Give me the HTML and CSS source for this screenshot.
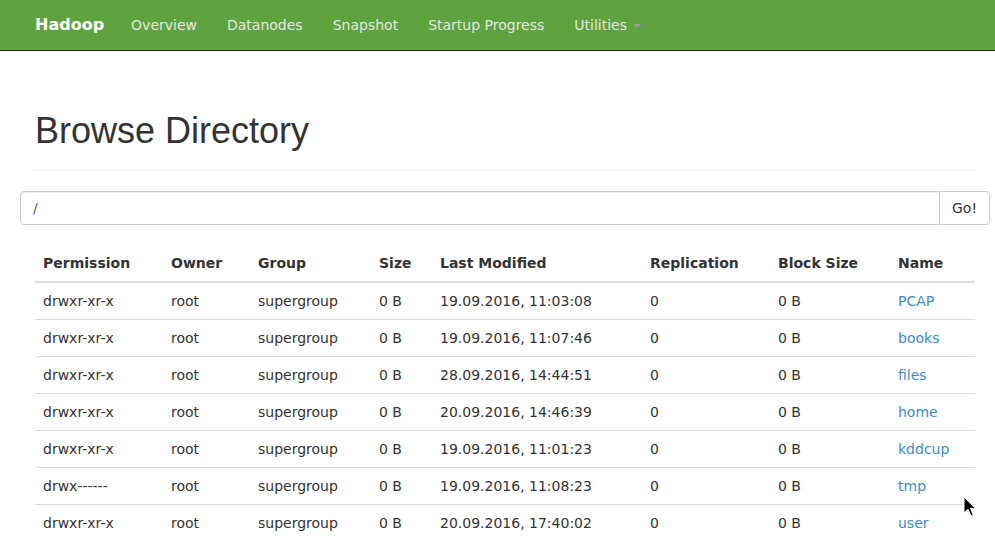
FILE: index.html
```html
<!DOCTYPE html>
<html>
<head>
<meta charset="utf-8">
<title>Browsing HDFS</title>
<link rel="stylesheet" href="styles.css">
</head>
<body>
<header class="navbar">
  <div class="nav-inner">
    <a class="brand" href="#">Hadoop</a>
    <ul class="nav-links">
      <li><a href="#">Overview</a></li>
      <li><a href="#">Datanodes</a></li>
      <li><a href="#">Snapshot</a></li>
      <li><a href="#">Startup Progress</a></li>
      <li><a href="#">Utilities <span class="caret"></span></a></li>
    </ul>
  </div>
</header>
<main class="container">
  <div class="page-header">
    <h1>Browse Directory</h1>
  </div>
  <div class="input-group">
    <input class="path-input" type="text" value="/">
    <button class="go-btn" type="button">Go!</button>
  </div>
  <table class="listing">
    <colgroup>
      <col class="c1"><col class="c2"><col class="c3"><col class="c4">
      <col class="c5"><col class="c6"><col class="c7"><col class="c8">
    </colgroup>
    <thead>
      <tr><th>Permission</th><th>Owner</th><th>Group</th><th>Size</th><th>Last Modified</th><th>Replication</th><th>Block Size</th><th>Name</th></tr>
    </thead>
    <tbody>
      <tr><td>drwxr-xr-x</td><td>root</td><td>supergroup</td><td>0 B</td><td>19.09.2016, 11:03:08</td><td>0</td><td>0 B</td><td><a href="#">PCAP</a></td></tr>
      <tr><td>drwxr-xr-x</td><td>root</td><td>supergroup</td><td>0 B</td><td>19.09.2016, 11:07:46</td><td>0</td><td>0 B</td><td><a href="#">books</a></td></tr>
      <tr><td>drwxr-xr-x</td><td>root</td><td>supergroup</td><td>0 B</td><td>28.09.2016, 14:44:51</td><td>0</td><td>0 B</td><td><a href="#">files</a></td></tr>
      <tr><td>drwxr-xr-x</td><td>root</td><td>supergroup</td><td>0 B</td><td>20.09.2016, 14:46:39</td><td>0</td><td>0 B</td><td><a href="#">home</a></td></tr>
      <tr><td>drwxr-xr-x</td><td>root</td><td>supergroup</td><td>0 B</td><td>19.09.2016, 11:01:23</td><td>0</td><td>0 B</td><td><a href="#">kddcup</a></td></tr>
      <tr><td>drwx------</td><td>root</td><td>supergroup</td><td>0 B</td><td>19.09.2016, 11:08:23</td><td>0</td><td>0 B</td><td><a href="#">tmp</a></td></tr>
      <tr><td>drwxr-xr-x</td><td>root</td><td>supergroup</td><td>0 B</td><td>20.09.2016, 17:40:02</td><td>0</td><td>0 B</td><td><a href="#">user</a></td></tr>
    </tbody>
  </table>
</main>
<svg class="cursor" width="14" height="22" viewBox="0 0 14 22" aria-hidden="true">
  <path d="M1 1 L1 17 L5 13.2 L7.8 19.8 L10.2 18.8 L7.5 12.3 L12.6 12.3 Z" fill="#000" stroke="#fff" stroke-width="1" stroke-linejoin="round"/>
</svg>
</body>
</html>
```

FILE: styles.css
```css
html, body {
  margin: 0;
  padding: 0;
}
body {
  font-family: "DejaVu Sans", sans-serif;
  font-size: 14px;
  line-height: 20px;
  color: #333;
  background: #fff;
  position: relative;
  min-height: 555px;
}
a {
  color: #428bca;
  text-decoration: none;
}

/* Navbar */
.navbar {
  height: 50px;
  background: #5fa33e;
  border-bottom: 1px solid #1f1f1f;
}
.nav-inner {
  margin-left: 20px;
  width: 970px;
  display: flex;
  align-items: center;
  height: 50px;
}
.brand {
  color: #fff;
  font-weight: bold;
  font-size: 16px;
  line-height: 20px;
  padding: 15px 12px 15px 15px;
}
.nav-links {
  display: flex;
  list-style: none;
  margin: 0;
  padding: 0;
}
.nav-links a {
  display: block;
  color: #e6e6e6;
  padding: 15px;
  line-height: 20px;
}
.caret {
  display: inline-block;
  width: 0;
  height: 0;
  margin-left: 2px;
  vertical-align: middle;
  border-top: 4px solid #999;
  border-left: 4px solid transparent;
  border-right: 4px solid transparent;
}

/* Main */
.container {
  margin-left: 20px;
  width: 940px;
  padding: 0 15px;
}
.page-header {
  margin-top: 60px;
  padding-bottom: 19px;
  border-bottom: 1px solid #eee;
  margin-bottom: 20px;
}
.page-header h1 {
  margin: 0;
  font-family: "Liberation Sans", Arial, sans-serif;
  font-weight: normal;
  font-size: 36px;
  line-height: 40px;
  color: #333;
}
.input-group {
  display: flex;
  margin: 0 -15px;
  height: 34px;
}
.path-input {
  flex: 1;
  box-sizing: border-box;
  height: 34px;
  padding: 6px 12px;
  font-family: "DejaVu Sans", sans-serif;
  font-size: 14px;
  color: #555;
  border: 1px solid #ccc;
  border-radius: 4px 0 0 4px;
  box-shadow: inset 0 1px 1px rgba(0,0,0,.075);
  outline: none;
}
.go-btn {
  box-sizing: border-box;
  height: 34px;
  padding: 6px 12px;
  margin-left: -1px;
  font-family: "DejaVu Sans", sans-serif;
  font-size: 14px;
  line-height: 20px;
  color: #333;
  background: #fff;
  border: 1px solid #ccc;
  border-radius: 0 4px 4px 0;
}

/* Table */
.listing {
  margin-top: 20px;
  width: 940px;
  table-layout: fixed;
  border-collapse: collapse;
  border-spacing: 0;
}
.c1 { width: 128px; }
.c2 { width: 87px; }
.c3 { width: 121px; }
.c4 { width: 61px; }
.c5 { width: 210px; }
.c6 { width: 128px; }
.c7 { width: 120px; }
.c8 { width: 85px; }
.listing th,
.listing td {
  padding: 8px;
  line-height: 20px;
  text-align: left;
  vertical-align: top;
  white-space: nowrap;
}
.listing th {
  font-weight: bold;
  border-bottom: 2px solid #ddd;
}
.listing td {
  border-top: 1px solid #ddd;
}

/* Mouse pointer captured in the screenshot */
.cursor {
  position: absolute;
  left: 963px;
  top: 496px;
}
```
